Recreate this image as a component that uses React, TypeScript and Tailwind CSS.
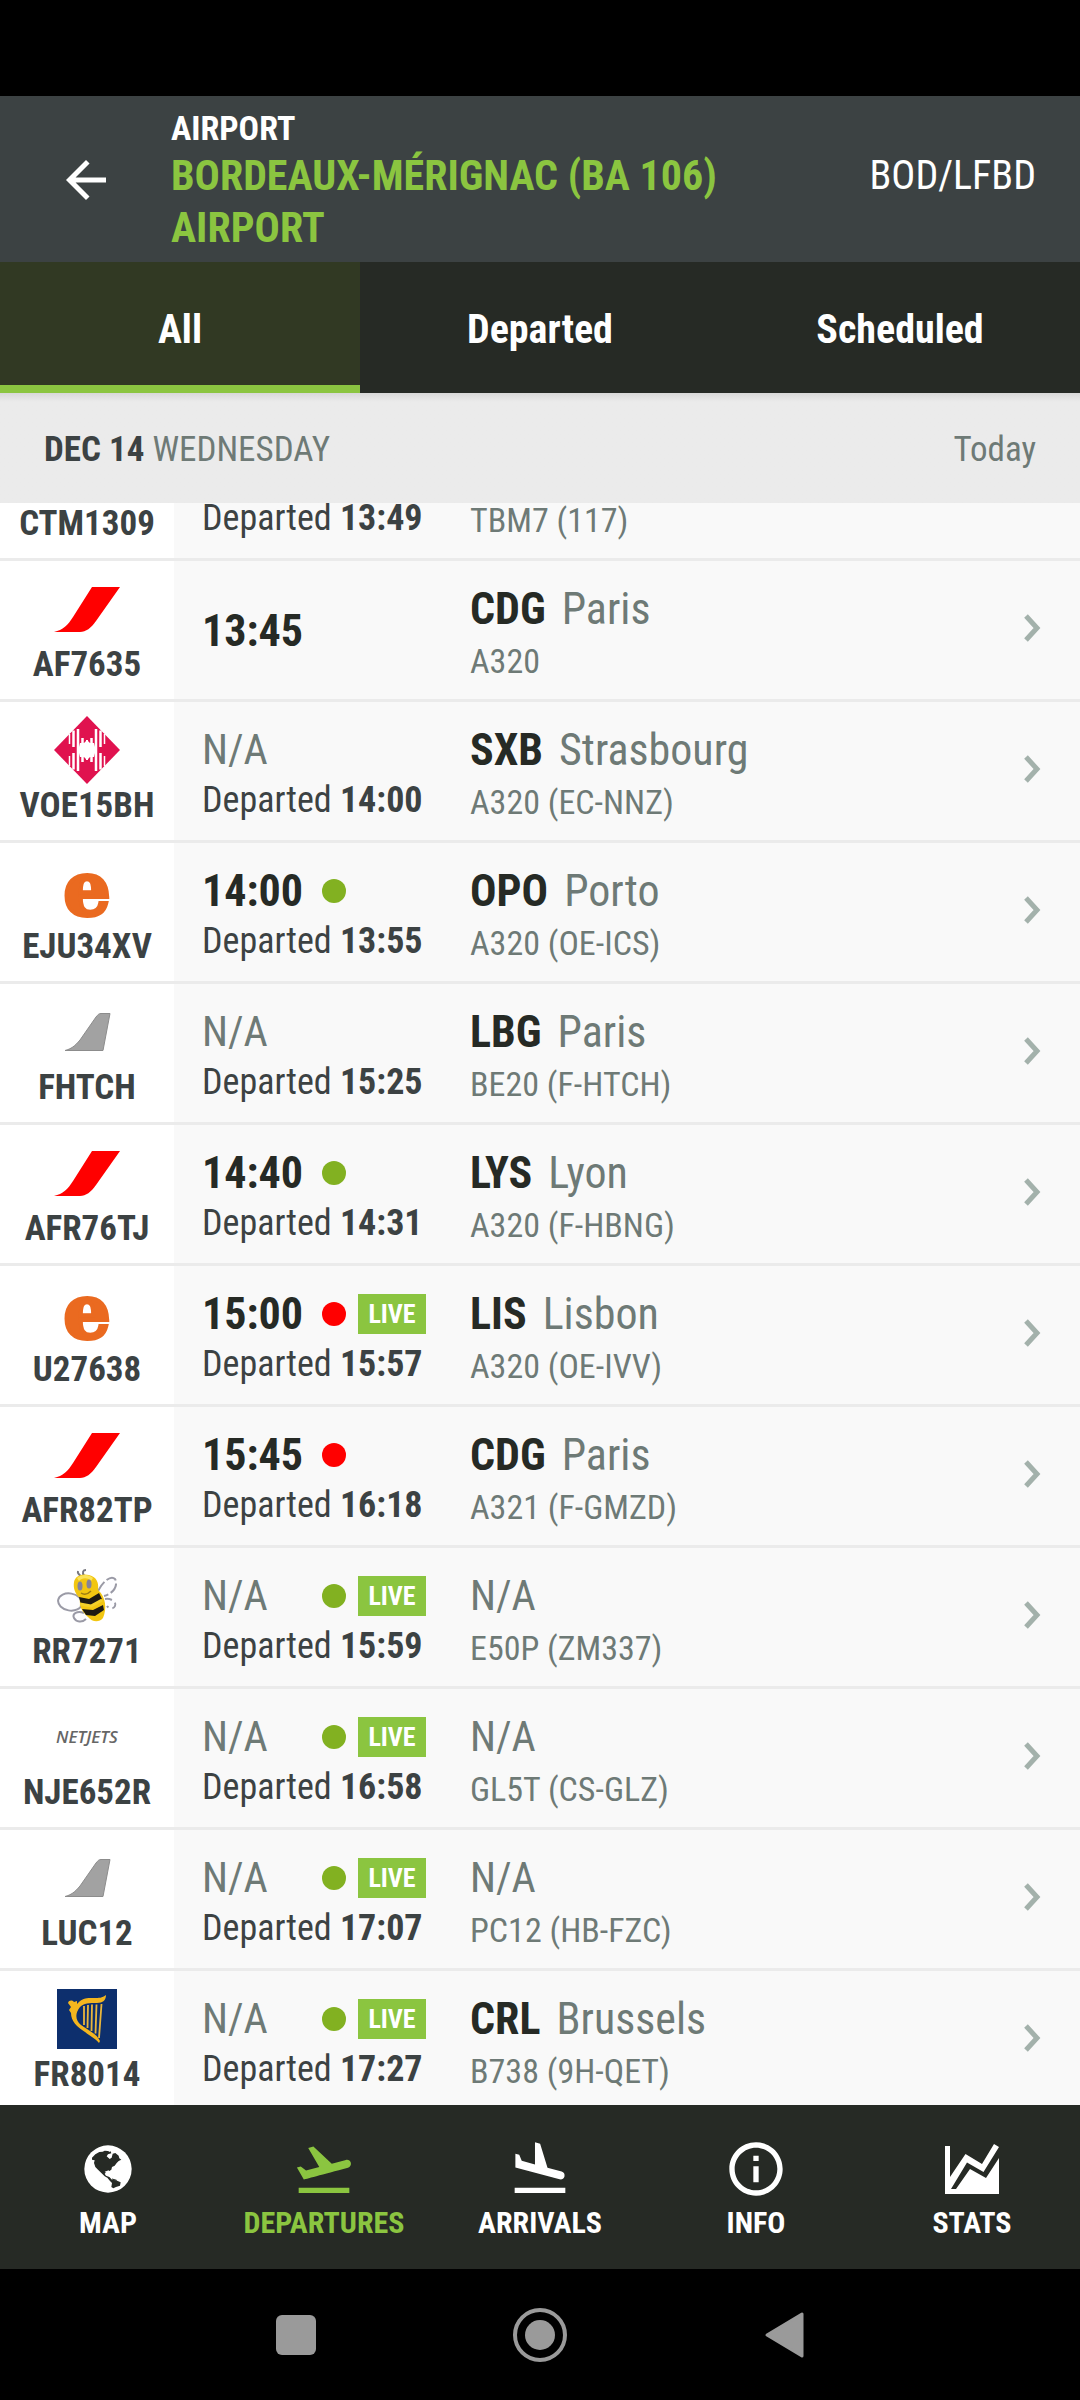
import type { ReactNode } from "react";
import { MdArrowBack, MdFlightLand, MdFlightTakeoff, MdInfoOutline } from "react-icons/md";
import clsx from "clsx";

type Airline = "airfrance" | "volotea" | "easyjet" | "generic" | "buzz" | "netjets" | "ryanair";

type Flight = {
  code: string;
  airline: Airline;
  time?: string;
  status?: "green" | "red";
  live?: boolean;
  departed?: string;
  iata?: string;
  city?: string;
  aircraft: string;
};

const flights: Flight[] = [
  { code: "CTM1309", airline: "generic", departed: "13:49", aircraft: "TBM7 (117)" },
  { code: "AF7635", airline: "airfrance", time: "13:45", iata: "CDG", city: "Paris", aircraft: "A320" },
  { code: "VOE15BH", airline: "volotea", departed: "14:00", iata: "SXB", city: "Strasbourg", aircraft: "A320 (EC-NNZ)" },
  { code: "EJU34XV", airline: "easyjet", time: "14:00", status: "green", departed: "13:55", iata: "OPO", city: "Porto", aircraft: "A320 (OE-ICS)" },
  { code: "FHTCH", airline: "generic", departed: "15:25", iata: "LBG", city: "Paris", aircraft: "BE20 (F-HTCH)" },
  { code: "AFR76TJ", airline: "airfrance", time: "14:40", status: "green", departed: "14:31", iata: "LYS", city: "Lyon", aircraft: "A320 (F-HBNG)" },
  { code: "U27638", airline: "easyjet", time: "15:00", status: "red", live: true, departed: "15:57", iata: "LIS", city: "Lisbon", aircraft: "A320 (OE-IVV)" },
  { code: "AFR82TP", airline: "airfrance", time: "15:45", status: "red", departed: "16:18", iata: "CDG", city: "Paris", aircraft: "A321 (F-GMZD)" },
  { code: "RR7271", airline: "buzz", status: "green", live: true, departed: "15:59", aircraft: "E50P (ZM337)" },
  { code: "NJE652R", airline: "netjets", status: "green", live: true, departed: "16:58", aircraft: "GL5T (CS-GLZ)" },
  { code: "LUC12", airline: "generic", status: "green", live: true, departed: "17:07", aircraft: "PC12 (HB-FZC)" },
  { code: "FR8014", airline: "ryanair", status: "green", live: true, departed: "17:27", iata: "CRL", city: "Brussels", aircraft: "B738 (9H-QET)" },
];

const tabs = ["All", "Departed", "Scheduled"];

function AirFranceLogo() {
  return (
    <svg viewBox="0 0 66 45" className="w-[66px] h-[45px]">
      <path d="M38 0H66L42 34C37 41 32 45 26 45H0C9 43 14 38 19 30Z" fill="#ff0000" />
    </svg>
  );
}

function VoloteaLogo() {
  return (
    <svg viewBox="0 0 66 68" className="w-[66px] h-[68px]">
      <path d="M33 0 66 34 33 68 0 34Z" fill="#e0124f" />
      <g stroke="#fff">
        <path strokeWidth="1.5" d="M15.5 18V28M15.5 40V50M50.5 18V28M50.5 40V50" />
        <path strokeWidth="2.5" d="M19.5 14.5V31M19.5 37V53.5M46.5 14.5V31M46.5 37V53.5" />
        <path strokeWidth="2.5" d="M24 13V55M42 13V55" />
        <path strokeWidth="2.5" d="M28.5 22V46M37.5 22V46" />
        <path strokeWidth="2" d="M33 24V44" />
      </g>
      <path d="M33 24 36 27H40L41 31 43 34 41 37 40 41H36L33 44 30 41H26L25 37 23 34 25 31 26 27H30Z" fill="#fff" />
    </svg>
  );
}

function EasyJetLogo() {
  return (
    <span className="font-['DejaVu_Serif',serif] font-bold text-[74px] leading-[44px] text-[#ea6a20] [-webkit-text-stroke:4px_#ea6a20] pb-1">
      e
    </span>
  );
}

function TailLogo() {
  return (
    <svg viewBox="0 0 47 38" className="w-[47px] h-[38px]">
      <path d="M37 .5H46L39 37.5H1C7 36 11 33 16 27L32 4C34 1.5 35 .5 37 .5Z" fill="#a2a2a2" stroke="#8c8c8c" />
    </svg>
  );
}

function BeeLogo() {
  return (
    <svg viewBox="0 0 60 54" className="w-[60px] h-[54px]">
      <g fill="#fdfdff" stroke="#9a9aa6" strokeWidth="2">
        <ellipse cx="13" cy="33" rx="12" ry="8.5" transform="rotate(10 13 33)" />
        <path d="M27 44C20 41 15 45 17 49C19 53 25 54 29 50" />
        <path d="M41 22C46 12 54 6 58 10C61 15 58 24 47 27" strokeDasharray="11 3" />
        <path d="M48 30C54 29 60 33 58 37C57 40 52 40 50 37" strokeDasharray="7 4" />
      </g>
      <path d="M24 8C22 4 20 5 21 2M27 7C25 3 26 1 29 1" fill="none" stroke="#77777f" strokeWidth="2" />
      <path d="M17 13C18 7 25 4 32 6C40 8 42 14 41 21C49 28 50 40 46 49C42 54 35 53 31 48C25 43 22 37 23 29C18 25 16 19 17 13Z" fill="#f2c611" />
      <path d="M20 9C24 5 32 5 36 9L34 12C30 8 25 9 22 12Z" fill="#fbe35a" />
      <path d="M22 28 32 30 42 24 45 30 36 37 24 36Z" fill="#1d1a12" />
      <path d="M25 40 36 41 46 36 47 41 38 47 29 46Z" fill="#1d1a12" />
      <path d="M23 35 34 37 45 31" fill="none" stroke="#f2d02b" strokeWidth="3" />
      <ellipse cx="23" cy="17" rx="2.5" ry="4.5" fill="#85839a" />
      <ellipse cx="32" cy="15" rx="2.5" ry="4.5" fill="#85839a" />
      <path d="M24 24C27 26 31 25 34 22" fill="none" stroke="#9c7c14" strokeWidth="1.5" />
    </svg>
  );
}

function NetJetsLogo() {
  return (
    <span className="font-['Open_Sans',sans-serif] font-semibold italic text-[17px] leading-6 text-[#666666]">
      NETJETS
    </span>
  );
}

function RyanairLogo() {
  return (
    <svg viewBox="0 0 60 60" className="w-[60px] h-[60px]">
      <rect width="60" height="60" fill="#0d2f6d" />
      <path
        d="M11 14C12 11 15 11 17 13L20 12V15C26 8 31 9 37 9C42 9 45 9 49 6C49 11 46 14 40 14C32 14 27 14 23 18C18 24 18 31 24 36C31 41 40 45 43 52L42 54C38 49 33 47 28 43C20 38 14 32 14 24L12 21 14 18Z"
        fill="#f4b61e"
      />
      <path
        d="M27 17V36M31 16 30.5 39M35 15.5 34.5 42M39.5 15.5 38.5 44.5M44.5 15 42 49"
        fill="none"
        stroke="#e9b63c"
        strokeWidth="1.8"
      />
    </svg>
  );
}

const logos: Record<Airline, ReactNode> = {
  airfrance: <AirFranceLogo />,
  volotea: <VoloteaLogo />,
  easyjet: <EasyJetLogo />,
  generic: <TailLogo />,
  buzz: <BeeLogo />,
  netjets: <NetJetsLogo />,
  ryanair: <RyanairLogo />,
};

function GlobeIcon() {
  return (
    <svg viewBox="0 0 144 144" className="w-12 h-12">
      <circle cx="72" cy="72" r="71" fill="currentColor" />
      <path
        d="M24 38 34 28 46 21 56 20 62 17 72 18 78 21 80 18 82 25 72 28 68 34 77 42 83 38 86 26 94 24 104 32 106 40 112 44 104 48 98 54 92 62 84 66 82 74 76 78 68 80 62 86 66 92 76 96 84 104 96 106 110 112 108 122 96 126 88 130 82 126 84 114 78 108 70 98 62 94 52 84 42 74 34 66 30 54 32 46 24 44Z"
        fill="#262a25"
      />
      <path d="M62 80 74 76 78 84 72 88Z" fill="currentColor" />
      <path d="M84 102 98 106" stroke="#262a25" strokeWidth="3" />
    </svg>
  );
}

function StatsIcon() {
  return (
    <svg viewBox="0 0 54 50" className="w-[54px] h-[50px]" fill="currentColor">
      <path d="M0 2H5V33L20.5 10 37 20 49 0 54 3 38.5 28 22 18.5 6 45H11L25 25 41 34 54 14V50H0Z" />
    </svg>
  );
}

const navItems = [
  { label: "MAP", icon: <GlobeIcon /> },
  { label: "DEPARTURES", icon: <MdFlightTakeoff size={64} />, active: true },
  { label: "ARRIVALS", icon: <MdFlightLand size={64} /> },
  { label: "INFO", icon: <MdInfoOutline size={64} /> },
  { label: "STATS", icon: <StatsIcon /> },
];

function Chevron() {
  return (
    <svg viewBox="0 0 17 28" className="w-[17px] h-7" fill="none" stroke="#a3b1ab" strokeWidth="5">
      <path d="M2 2 13 14 2 26" />
    </svg>
  );
}

function FlightRow({ flight }: { flight: Flight }) {
  return (
    <li className="flex h-[141px] shrink-0 border-b-3 border-[#ebebeb] bg-[#f9f9f9] text-[34px]">
      <div className="w-[174px] shrink-0 bg-white pt-2 flex flex-col items-center">
        <div className="h-20 flex items-center justify-center">{logos[flight.airline]}</div>
        <div className="text-[35px] leading-8 font-bold text-[#3c4243]">{flight.code}</div>
      </div>

      <div className="w-[296px] shrink-0 pl-7 pt-0.5 flex flex-col justify-center gap-2">
        <div className="flex items-center h-12">
          <div
            className={clsx(
              "w-[120px] leading-12",
              flight.time ? "text-[44px] font-bold text-[#262a25]" : "text-[42px] text-[#6e7a76]"
            )}
          >
            {flight.time ?? "N/A"}
          </div>
          {flight.status && (
            <span
              className={clsx(
                "size-6 rounded-full",
                flight.status === "red" ? "bg-[#ff0000]" : "bg-[#82b121]"
              )}
            />
          )}
          {flight.live && (
            <span className="ml-3 w-17 h-10 bg-[#8bc540] text-white text-[26px] leading-10 font-bold text-center">
              LIVE
            </span>
          )}
        </div>
        {flight.departed && (
          <div className="text-[36px] leading-9 text-[#3c4243]">
            Departed <b>{flight.departed}</b>
          </div>
        )}
      </div>

      <div className="flex-1 pt-6 text-[#6e7a76]">
        <div className="flex gap-4 text-[44px] leading-12">
          {flight.iata ? (
            <>
              <b className="text-[#262a25]">{flight.iata}</b>
              <span>{flight.city}</span>
            </>
          ) : (
            <span className="text-[42px]">N/A</span>
          )}
        </div>
        <div className="mt-2 leading-10">{flight.aircraft}</div>
      </div>

      <button aria-label={`Open ${flight.code}`} className="w-14 shrink-0 pb-1 flex items-center">
        <Chevron />
      </button>
    </li>
  );
}

export default function App() {
  return (
    <div className="h-screen flex flex-col bg-black font-['Roboto_Condensed','Roboto',sans-serif]">
      <div className="h-24 shrink-0" />

      <header className="shrink-0 flex items-start bg-[#3c4243] pt-2.5 pb-2 pr-11 text-white">
        <button aria-label="Back" className="w-[171px] self-center pl-14">
          <MdArrowBack size={60} />
        </button>
        <div className="flex-1">
          <div className="text-[34px] leading-11 font-bold">AIRPORT</div>
          <h1 className="max-w-[600px] text-[42px] leading-13 font-bold text-[#8bc540]">
            BORDEAUX-MÉRIGNAC (BA 106) AIRPORT
          </h1>
        </div>
        <div className="pt-11 text-[40px] leading-13">BOD/LFBD</div>
      </header>

      <nav className="shrink-0 grid grid-cols-3 bg-[#262a25] text-white">
        {tabs.map((tab, i) => (
          <button
            key={tab}
            className={clsx(
              "h-[131px] border-b-8 pt-3 text-[40px] font-bold",
              i === 0 ? "bg-[#313923] border-[#8bc540]" : "border-transparent"
            )}
          >
            {tab}
          </button>
        ))}
      </nav>

      <div className="h-[110px] shrink-0 flex items-center justify-between px-11 pt-1 bg-linear-to-b from-[#d8d8d8] from-0% to-[#ebebeb] to-8% text-[35px] text-[#6e7a76]">
        <div>
          <b className="text-[#3c4243]">DEC 14</b> WEDNESDAY
        </div>
        <div>Today</div>
      </div>

      <main className="flex-1 min-h-0 overflow-hidden bg-[#f9f9f9]">
        <ul className="flex flex-col -mt-[83px]">
          {flights.map((flight) => (
            <FlightRow key={flight.code} flight={flight} />
          ))}
        </ul>
      </main>

      <nav className="h-[164px] shrink-0 grid grid-cols-5 bg-[#262a25] text-white">
        {navItems.map((item) => (
          <a
            key={item.label}
            href="#"
            className={clsx("flex flex-col items-center pt-8", item.active && "text-[#8bc540]")}
          >
            <span className="h-16 flex items-center justify-center">{item.icon}</span>
            <span className="text-[30px] leading-11 font-bold">{item.label}</span>
          </a>
        ))}
      </nav>

      <div className="h-[131px] shrink-0 flex items-center justify-center gap-[188px] text-[#9a9a9a]">
        <button aria-label="Recents" className="p-2">
          <div className="size-10 rounded-md bg-current" />
        </button>
        <button aria-label="Home">
          <svg viewBox="0 0 56 56" className="size-14">
            <circle cx="28" cy="28" r="25" fill="none" stroke="currentColor" strokeWidth="4" />
            <circle cx="28" cy="28" r="15" fill="currentColor" />
          </svg>
        </button>
        <button aria-label="Back to previous app" className="p-2">
          <svg viewBox="0 0 40 48" className="w-10 h-12">
            <path d="M38 3V45L3 24Z" fill="currentColor" stroke="currentColor" strokeWidth="3" strokeLinejoin="round" />
          </svg>
        </button>
      </div>
    </div>
  );
}
